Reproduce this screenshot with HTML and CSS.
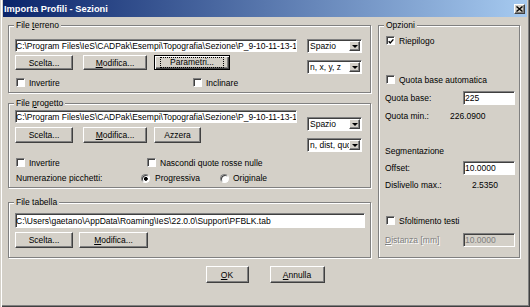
FILE: index.html
```html
<!DOCTYPE html>
<html lang="it">
<head>
    <meta charset="UTF-8">
    <meta name="viewport" content="width=device-width, initial-scale=1.0">
    <title>Importa Profili - Sezioni</title>
    <link rel="stylesheet" href="styles.css">
</head>
<body>
<div class="window">
    <div class="titlebar">
        <span class="title">Importa Profili - Sezioni</span>
        <span class="close">
            <svg width="7" height="6" viewBox="0 0 7 6"><path d="M0.5 0.5 L6.5 5.5 M6.5 0.5 L0.5 5.5" stroke="#000" stroke-width="1.4" fill="none"/></svg>
        </span>
    </div>

    <div class="main">
        <div class="groups">
            <!-- File terreno -->
            <fieldset class="group terreno">
                <legend>File <u>t</u>erreno</legend>
                <div class="group-grid">
                    <div class="col">
                        <input class="path" type="text" value="C:\Program Files\IeS\CADPak\Esempi\Topografia\Sezione\P_9-10-11-13-14.txt" readonly>
                        <div class="buttons">
                            <button class="btn w-scelta">Scelta...</button>
                            <button class="btn w-modifica"><u>M</u>odifica...</button>
                            <button class="btn default w-param"><span class="focus">Parametri...</span></button>
                        </div>
                        <div class="row checks">
                            <label class="check w-terreno"><span class="box"></span>Invertire</label>
                            <label class="check"><span class="box"></span>Inclinare</label>
                        </div>
                    </div>
                    <div class="col side">
                        <div class="combo"><span class="combo-text">Spazio</span><span class="drop"></span></div>
                        <div class="combo"><span class="combo-text">n, x, y, z</span><span class="drop"></span></div>
                    </div>
                </div>
            </fieldset>

            <!-- File progetto -->
            <fieldset class="group progetto">
                <legend>File <u>p</u>rogetto</legend>
                <div class="group-grid">
                    <div class="col">
                        <input class="path" type="text" value="C:\Program Files\IeS\CADPak\Esempi\Topografia\Sezione\P_9-10-11-13-14.prg" readonly>
                        <div class="buttons tall">
                            <button class="btn w-scelta">Scelta...</button>
                            <button class="btn w-modifica"><u>M</u>odifica...</button>
                            <button class="btn w-azzera">Azzera</button>
                        </div>
                        <div class="row checks gap-checks">
                            <label class="check w-progetto"><span class="box"></span>Invertire</label>
                            <label class="check"><span class="box"></span>Nascondi quote rosse nulle</label>
                        </div>
                        <div class="row radios">
                            <span class="w-numera">Numerazione picchetti:</span>
                            <label class="check w-progressiva"><span class="radio on"></span>Progressiva</label>
                            <label class="check"><span class="radio"></span>Originale</label>
                        </div>
                    </div>
                    <div class="col side lower">
                        <div class="combo"><span class="combo-text">Spazio</span><span class="drop"></span></div>
                        <div class="combo"><span class="combo-text">n, dist, quot</span><span class="drop"></span></div>
                    </div>
                </div>
            </fieldset>

            <!-- File tabella -->
            <fieldset class="group tabella">
                <legend>File tabella</legend>
                <input class="path wide" type="text" value="C:\Users\gaetano\AppData\Roaming\IeS\22.0.0\Support\PFBLK.tab" readonly>
                <div class="buttons tall">
                    <button class="btn w-scelta">Scelta...</button>
                    <button class="btn w-modifica2"><u>M</u>odifica...</button>
                </div>
            </fieldset>
        </div>

        <!-- Opzioni -->
        <fieldset class="group opzioni">
            <legend>Opzioni</legend>
            <label class="check opt"><span class="box checked"><svg width="7" height="7" viewBox="0 0 7 7"><path d="M0.8 3.2 L2.6 5.2 L6.3 1" stroke="#000" stroke-width="1.6" fill="none"/></svg></span>Riepilogo</label>
            <label class="check opt m-auto"><span class="box"></span>Quota base automatica</label>
            <div class="opt field m-base"><span>Quota base:</span><input class="num" type="text" value="225" readonly></div>
            <div class="opt m-min"><span class="w-min">Quota min.:</span><span>226.0900</span></div>
            <div class="opt m-seg">Segmentazione</div>
            <div class="opt field m-offset"><span>Offset:</span><input class="num" type="text" value="10.0000" readonly></div>
            <div class="opt m-disl"><span class="w-disl">Dislivello max.:</span><span>2.5350</span></div>
            <label class="check opt m-sfolt"><span class="box"></span>Sfoltimento testi</label>
            <div class="opt field m-dist"><span class="disabled"><u>D</u>istanza [mm]</span><input class="num" type="text" value="10.0000" disabled></div>
        </fieldset>
    </div>

    <div class="actions">
        <button class="btn w-ok"><u>O</u>K</button>
        <button class="btn w-annulla"><u>A</u>nnulla</button>
    </div>
</div>
</body>
</html>
```

FILE: styles.css
```css
* {
    box-sizing: border-box;
}
body {
    margin: 0;
    font-family: "Liberation Sans", Arial, sans-serif;
    font-size: 8.5px;
    color: #000;
    background: #d4d0c8;
}
u {
    text-decoration-thickness: 1px;
    text-underline-offset: 1px;
}

/* window frame */
.window {
    width: 530px;
    height: 307px;
    padding: 0 3px 3px 3px;
    background: #d4d0c8;
    box-shadow: inset 1px 0 0 #d4d0c8, inset 2px 0 0 #fff, inset -1px -1px 0 #404040, inset -2px -2px 0 #808080;
}
.titlebar {
    height: 17px;
    display: flex;
    align-items: center;
    justify-content: space-between;
    padding: 0 2px 0 1px;
    background: linear-gradient(to right, #0a246a, #a6caf0);
    color: #fff;
    font-weight: bold;
    font-size: 9.3px;
}
.close {
    width: 11px;
    height: 10px;
    display: flex;
    align-items: center;
    justify-content: center;
    background: #d4d0c8;
    border: 1px solid;
    border-color: #fff #404040 #404040 #fff;
    box-shadow: inset -1px -1px 0 #808080;
}

/* layout */
.main {
    display: flex;
    gap: 7px;
    padding: 3px 7px 0 5px;
}
.groups {
    width: 363px;
    display: flex;
    flex-direction: column;
}
.group {
    margin: 0;
    min-width: 0;
    border: 1px solid #808080;
    box-shadow: inset 1px 1px 0 #fff, 1px 1px 0 #fff;
    padding: 9px 8px 4px 6px;
}
.group legend {
    padding: 0 2px;
    margin-left: -1px;
    line-height: 10px;
    background: #d4d0c8;
}
.progetto {
    margin-top: 5px;
    padding-top: 2px;
    padding-bottom: 3px;
}
.tabella {
    margin-top: 9px;
    padding: 6px 5px 9px 6px;
}
.opzioni {
    flex: 1;
    padding: 5px 4px 0 6px;
}
.group-grid {
    display: grid;
    grid-template-columns: 282px 55px;
    column-gap: 10px;
}
.col {
    display: flex;
    flex-direction: column;
}
.side {
    gap: 7px;
}
.side.lower {
    padding-top: 7px;
}

/* controls */
.path {
    display: block;
    width: 100%;
    height: 13px;
    margin: 0;
    padding: 0;
    font: inherit;
    color: #000;
    background: #fff;
    border: 1px solid;
    border-color: #808080 #fff #fff #808080;
    box-shadow: inset 1px 1px 0 #404040;
    outline: none;
}
.path.wide {
    height: 15px;
}
.num {
    width: 52px;
    height: 14px;
    margin: 0;
    padding: 0 1px;
    font: inherit;
    color: #000;
    background: #fff;
    border: 1px solid;
    border-color: #808080 #fff #fff #808080;
    box-shadow: inset 1px 1px 0 #404040;
    outline: none;
}
.num:disabled {
    background: #d4d0c8;
    color: #808080;
}
.buttons {
    display: flex;
    margin-top: 3px;
}
.buttons.tall {
    margin-top: 4px;
}
.btn {
    height: 15px;
    margin: 0;
    padding: 0;
    font: inherit;
    color: #000;
    background: #d4d0c8;
    border: 1px solid;
    border-color: #fff #404040 #404040 #fff;
    box-shadow: inset -1px -1px 0 #808080;
    display: flex;
    align-items: center;
    justify-content: center;
}
.buttons.tall .btn {
    height: 16px;
}
.btn.default {
    border-color: #000;
    box-shadow: inset 1px 1px 0 #fff, inset -1px -1px 0 #404040, inset -2px -2px 0 #808080;
}
.focus {
    outline: 1px dotted #000;
    outline-offset: 0;
    padding: 0 9px;
    line-height: 9px;
}
.w-scelta { width: 58px; margin-right: 10px !important; }
.w-modifica { width: 64px; margin-right: 7px !important; }
.w-modifica2 { width: 69px; }
.tabella .w-scelta { margin-right: 6px !important; }
.w-param { width: 76px; }
.w-azzera { width: 47px; }

.row {
    display: flex;
    align-items: center;
    height: 11px;
}
.checks {
    margin-top: 7px;
}
.gap-checks {
    margin-top: 14px;
}
.radios {
    margin-top: 4px;
    height: 12px;
}
.check {
    display: flex;
    align-items: center;
    gap: 4px;
    white-space: nowrap;
}
.box {
    width: 9px;
    height: 9px;
    flex: none;
    margin-left: 1px;
    background: #fff;
    border: 1px solid;
    border-color: #808080 #fff #fff #808080;
    box-shadow: inset 1px 1px 0 #404040;
    display: flex;
    align-items: center;
    justify-content: center;
}
.box svg {
    margin: 1px 0 0 1px;
}
.radio {
    width: 9px;
    height: 9px;
    flex: none;
    border-radius: 50%;
    background: #fff;
    border: 1px solid;
    border-color: #808080 #fff #fff #808080;
    box-shadow: inset 1px 1px 0 #404040;
}
.radio.on {
    background: radial-gradient(circle at 55% 55%, #000 0 1.6px, #fff 2.2px);
}
.w-terreno { width: 177px; }
.w-progetto { width: 131px; }
.w-numera { width: 125px; margin-left: 1px; }
.w-progressiva { width: 79px; gap: 5px; }

.combo {
    width: 55px;
    height: 14px;
    display: flex;
    padding: 1px 1px 1px 2px;
    background: #fff;
    border: 1px solid;
    border-color: #808080 #fff #fff #808080;
    box-shadow: inset 1px 1px 0 #404040;
}
.combo-text {
    flex: 1;
    overflow: hidden;
    white-space: nowrap;
    line-height: 10px;
}
.drop {
    width: 11px;
    flex: none;
    background: #d4d0c8;
    border: 1px solid;
    border-color: #fff #404040 #404040 #fff;
    box-shadow: inset -1px -1px 0 #808080;
    display: flex;
    align-items: center;
    justify-content: center;
}
.drop::after {
    content: "";
    border-left: 3px solid transparent;
    border-right: 3px solid transparent;
    border-top: 3px solid #000;
    margin-top: 1px;
}

/* opzioni */
.opt {
    display: flex;
    align-items: center;
    height: 11px;
    white-space: nowrap;
}
.opt.field {
    height: 14px;
    justify-content: space-between;
}
.m-auto { margin-top: 28px; }
.m-base { margin-top: 6px; }
.m-min { margin-top: 5px; }
.m-seg { margin-top: 24px; }
.m-offset { margin-top: 5px; }
.m-disl { margin-top: 4px; }
.m-sfolt { margin-top: 25px; }
.m-dist { margin-top: 7px; }
.w-min { width: 65px; }
.w-disl { width: 87px; }
.disabled {
    color: #808080;
    text-shadow: 1px 1px 0 #fff;
}

/* dialog buttons */
.actions {
    display: flex;
    justify-content: center;
    gap: 21px;
    margin-top: 8px;
}
.actions .btn {
    height: 17px;
}
.w-ok { width: 43px; }
.w-annulla { width: 55px; }
```
